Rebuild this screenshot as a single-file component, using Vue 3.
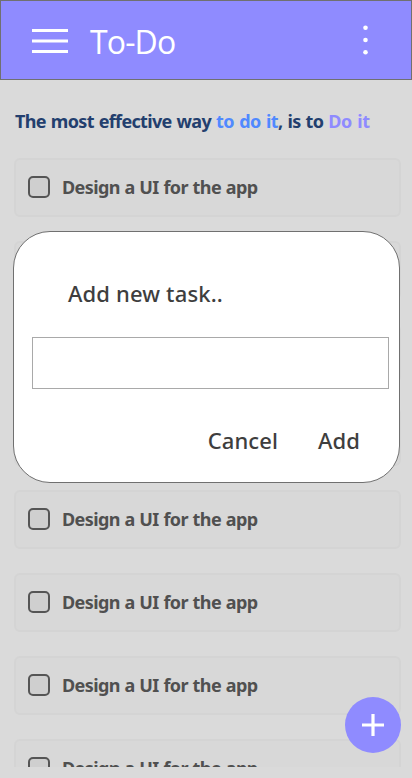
<script setup>
import { ref } from 'vue'

const tasks = ref(Array.from({ length: 8 }, (_, id) => ({ id, title: 'Design a UI for the app' })))
</script>

<template>
  <div class="screen">
    <header class="bar">
      <svg class="menu" width="36" height="24" viewBox="0 0 36 24">
        <path d="M0 1.5H36M0 12H36M0 22.5H36" stroke="#fff" stroke-width="3" />
      </svg>
      <h1 class="title">To-Do</h1>
      <svg class="more" width="6" height="30" viewBox="0 0 6 30" fill="#fff">
        <circle cx="2.5" cy="2.7" r="2.3" />
        <circle cx="2.5" cy="15" r="2.3" />
        <circle cx="2.5" cy="27.3" r="2.3" />
      </svg>
    </header>
    <p class="motto">The most effective way <span class="blue">to do it</span>, is to <span class="violet">Do it</span></p>
    <ul class="list">
      <li v-for="task in tasks" :key="task.id" class="task">
        <span class="box"></span>
        <span class="name">{{ task.title }}</span>
      </li>
    </ul>
    <div class="dialog">
      <h2 class="heading">Add new task..</h2>
      <div class="field"></div>
      <div class="actions">
        <span class="cancel">Cancel</span>
        <span class="add">Add</span>
      </div>
    </div>
    <div class="fab">
      <svg width="22" height="22" viewBox="0 0 22 22">
        <path d="M11 0V22M0 11H22" stroke="#fff" stroke-width="3.2" />
      </svg>
    </div>
  </div>
</template>

<style>
body { background: #dadada; }
</style>

<style scoped>
.screen {
  position: relative;
  width: 412px;
  height: 778px;
  overflow: hidden;
  background: #dadada;
  font-family: "Noto Sans", "Open Sans", sans-serif;
}
.bar {
  box-sizing: border-box;
  height: 80px;
  border: 1px solid #707070;
  background: #8f8bff;
  display: flex;
  align-items: center;
  padding: 2px 42px 0 31px;
}
.menu { flex: none; }
.title {
  margin: 2px 0 0 22px;
  font-family: "Open Sans", sans-serif;
  font-size: 32px;
  line-height: 44px;
  font-weight: 400;
  letter-spacing: -0.85px;
  color: #fff;
  white-space: nowrap;
}
.more {
  margin-left: auto;
  margin-bottom: 2px;
}
.motto {
  margin: 29px 0 0 15px;
  font-size: 18px;
  line-height: 25px;
  font-weight: 700;
  color: #233f6e;
  white-space: nowrap;
  letter-spacing: -0.66px;
  word-spacing: 0.9px;
}
.blue {
  color: #5089ff;
  letter-spacing: -0.5px;
}
.violet {
  color: #8f8bff;
  letter-spacing: -0.3px;
}
.list {
  list-style: none;
  margin: 24px 11px 0 14px;
  padding: 0;
  height: 609px;
  overflow: hidden;
}
.task {
  box-sizing: border-box;
  height: 59px;
  margin-bottom: 24px;
  border: 2px solid #d4d4d4;
  border-radius: 6px;
  background: #d8d8d8;
  display: flex;
  align-items: center;
  padding: 0 12px;
}
.box {
  box-sizing: border-box;
  width: 22px;
  height: 22px;
  margin-bottom: 1px;
  border: 2px solid #555;
  border-radius: 5px;
  background: #cfcfcf;
}
.name {
  margin-left: 12px;
  font-size: 18px;
  line-height: 25px;
  font-weight: 700;
  color: #505050;
  white-space: nowrap;
  letter-spacing: -0.6px;
  word-spacing: 0.6px;
}
.dialog {
  position: absolute;
  left: 13px;
  top: 231px;
  box-sizing: border-box;
  width: 387px;
  height: 252px;
  border: 1px solid #707070;
  border-radius: 37px;
  background: #fff;
  color: #3e3e3e;
}
.heading {
  margin: 46px 0 0 54px;
  font-size: 22px;
  line-height: 30px;
  font-weight: 500;
  letter-spacing: 0.15px;
}
.field {
  box-sizing: border-box;
  width: 357px;
  height: 52px;
  margin: 29px 0 0 18px;
  border: 1px solid #a9a9a9;
}
.actions {
  display: flex;
  justify-content: flex-end;
  gap: 40px;
  margin: 36px 39px 0 0;
  font-size: 22px;
  line-height: 30px;
  font-weight: 500;
  letter-spacing: 0.1px;
}
.fab {
  position: absolute;
  left: 345px;
  top: 697px;
  width: 56px;
  height: 56px;
  border-radius: 50%;
  background: #8f8bff;
  display: flex;
  align-items: center;
  justify-content: center;
}
</style>
